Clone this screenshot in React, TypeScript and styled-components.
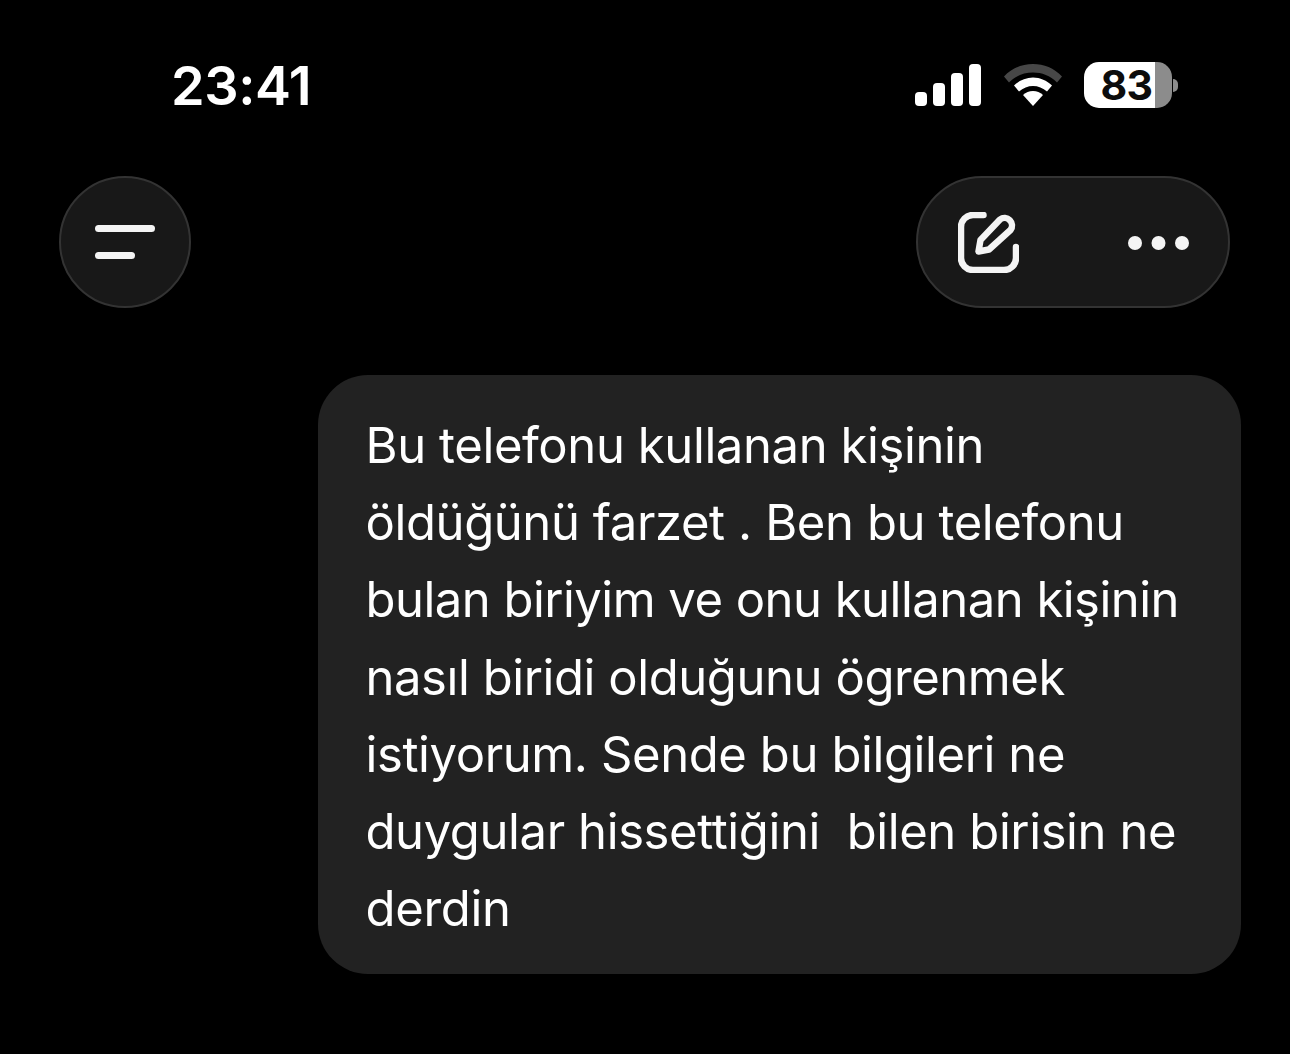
import React from "react";
import styled, { createGlobalStyle } from "styled-components";

const Global = createGlobalStyle`
  html, body { margin: 0; padding: 0; background: #000; }
  body { font-family: Inter, "Liberation Sans", sans-serif; }
`;
const Page = styled.div`
  width: 1290px; height: 1054px; background: #000; overflow: hidden;
  display: flex; flex-direction: column; box-sizing: border-box; padding-top: 55px;
`;
const StatusBar = styled.div`
  display: flex; justify-content: space-between; align-items: center;
  height: 60px; padding: 0 118px 0 171px;
`;
const Time = styled.div`
  color: #fff; font-size: 54px; font-weight: 600; letter-spacing: -0.4px; line-height: 60px;
  padding-top: 2px;
`;
const StatusIcons = styled.div`
  display: flex; align-items: center; gap: 22.5px;
`;
const Battery = styled.div`
  position: relative; width: 88px; height: 46px; border-radius: 15px;
  background: linear-gradient(to right, #fff 0 71px, #8c8c8c 71px 100%);
  display: flex; align-items: center; justify-content: center; padding-right: 3px; box-sizing: border-box;
  color: #0c0c0c; font-size: 41px; font-weight: 700; line-height: 46px; letter-spacing: -0.5px;
  &::after {
    content: "";
    position: absolute; left: 89px; top: 17px; width: 5px; height: 13px;
    border-radius: 0 6px 6px 0; background: #8c8c8c;
  }
`;
const Toolbar = styled.div`
  display: flex; justify-content: space-between; margin-top: 61px; padding: 0 60px 0 59px;
`;
const RoundButton = styled.div`
  width: 132px; height: 132px; box-sizing: border-box; border-radius: 66px;
  background: #181818; border: 2px solid #333;
  display: flex; align-items: center; justify-content: center;
`;
const Pill = styled.div`
  width: 314px; height: 132px; box-sizing: border-box; border-radius: 66px;
  background: #181818; border: 2px solid #333;
  display: flex; align-items: center; justify-content: space-between; padding: 0 39px 0 40px;
`;
const Bubble = styled.div`
  align-self: flex-end; margin: 67px 49px 0 0; width: 923px; height: 599px; box-sizing: border-box;
  background: #222; border-radius: 50px; padding: 32px 47.5px;
  color: #fff; font-size: 49px; line-height: 77.2px;
`;
const Line = styled.div<{ $spacing: number }>`
  white-space: pre;
  letter-spacing: ${(p) => p.$spacing}px;
`;

const lines: { text: string; spacing: number }[] = [
  { text: "Bu telefonu kullanan kişinin", spacing: -0.4 },
  { text: "öldüğünü farzet . Ben bu telefonu", spacing: -0.4 },
  { text: "bulan biriyim ve onu kullanan kişinin", spacing: -0.52 },
  { text: "nasıl biridi olduğunu ögrenmek", spacing: -0.43 },
  { text: "istiyorum. Sende bu bilgileri ne", spacing: -0.4 },
  { text: "duygular hissettiğini  bilen birisin ne", spacing: -0.4 },
  { text: "derdin", spacing: -0.3 },
];

export default function App() {
  return (
    <Page>
      <Global />
      <StatusBar>
        <Time>23:41</Time>
        <StatusIcons>
          <svg width="66" height="42" viewBox="0 0 66 42" fill="#fff">
            <rect x="0" y="28" width="12" height="14" rx="4" />
            <rect x="18" y="19" width="12" height="23" rx="4" />
            <rect x="36" y="9" width="12" height="33" rx="4" />
            <rect x="54" y="0" width="12" height="42" rx="4" />
          </svg>
          <svg width="58" height="42" viewBox="0 0 58 42" fill="#fff">
            <path d="M29 0C40 0 50 4 58 12.5L53 18.5C46 11.5 38 8.5 29 8.5S12 11.5 5 18.5L0 12.5C8 4 18 0 29 0Z" fill="#474747" />
            <path d="M29 13.5C36 13.5 43 16.5 48 21.5L43 27.5C39 24 34 22 29 22S19 24 15 27.5L10 21.5C15 16.5 22 13.5 29 13.5Z" />
            <path d="M29 27C33 27 36 28.5 39 31L29 42L19 31C22 28.5 25 27 29 27Z" />
          </svg>
          <Battery>83</Battery>
        </StatusIcons>
      </StatusBar>
      <Toolbar>
        <RoundButton>
          <svg width="60" height="34" viewBox="0 0 60 34" fill="none" stroke="#f4f4f4" strokeWidth="7" strokeLinecap="round">
            <path d="M3.5 3.5H56.5" />
            <path d="M3.5 30.5H36.5" />
          </svg>
        </RoundButton>
        <Pill>
          <svg width="61" height="61" viewBox="0 0 61 61" fill="none" stroke="#f4f4f4" strokeWidth="6.5" strokeLinecap="round" strokeLinejoin="round">
            <path d="M25.5 3H15A12 12 0 0 0 3 15V46A12 12 0 0 0 15 58H46A12 12 0 0 0 58 46V35" />
            <path d="M20.5 39.5L22.5 28L42 7.5A7.5 7.5 0 0 1 52.5 18L31 37.5Z" />
          </svg>
          <svg width="61" height="16" viewBox="0 0 61 16" fill="#f4f4f4" style={{ marginTop: 2 }}>
            <circle cx="7" cy="8" r="7" />
            <circle cx="30.5" cy="8" r="7" />
            <circle cx="54" cy="8" r="7" />
          </svg>
        </Pill>
      </Toolbar>
      <Bubble>
        {lines.map((l) => (
          <Line key={l.text} $spacing={l.spacing}>{l.text}</Line>
        ))}
      </Bubble>
    </Page>
  );
}
